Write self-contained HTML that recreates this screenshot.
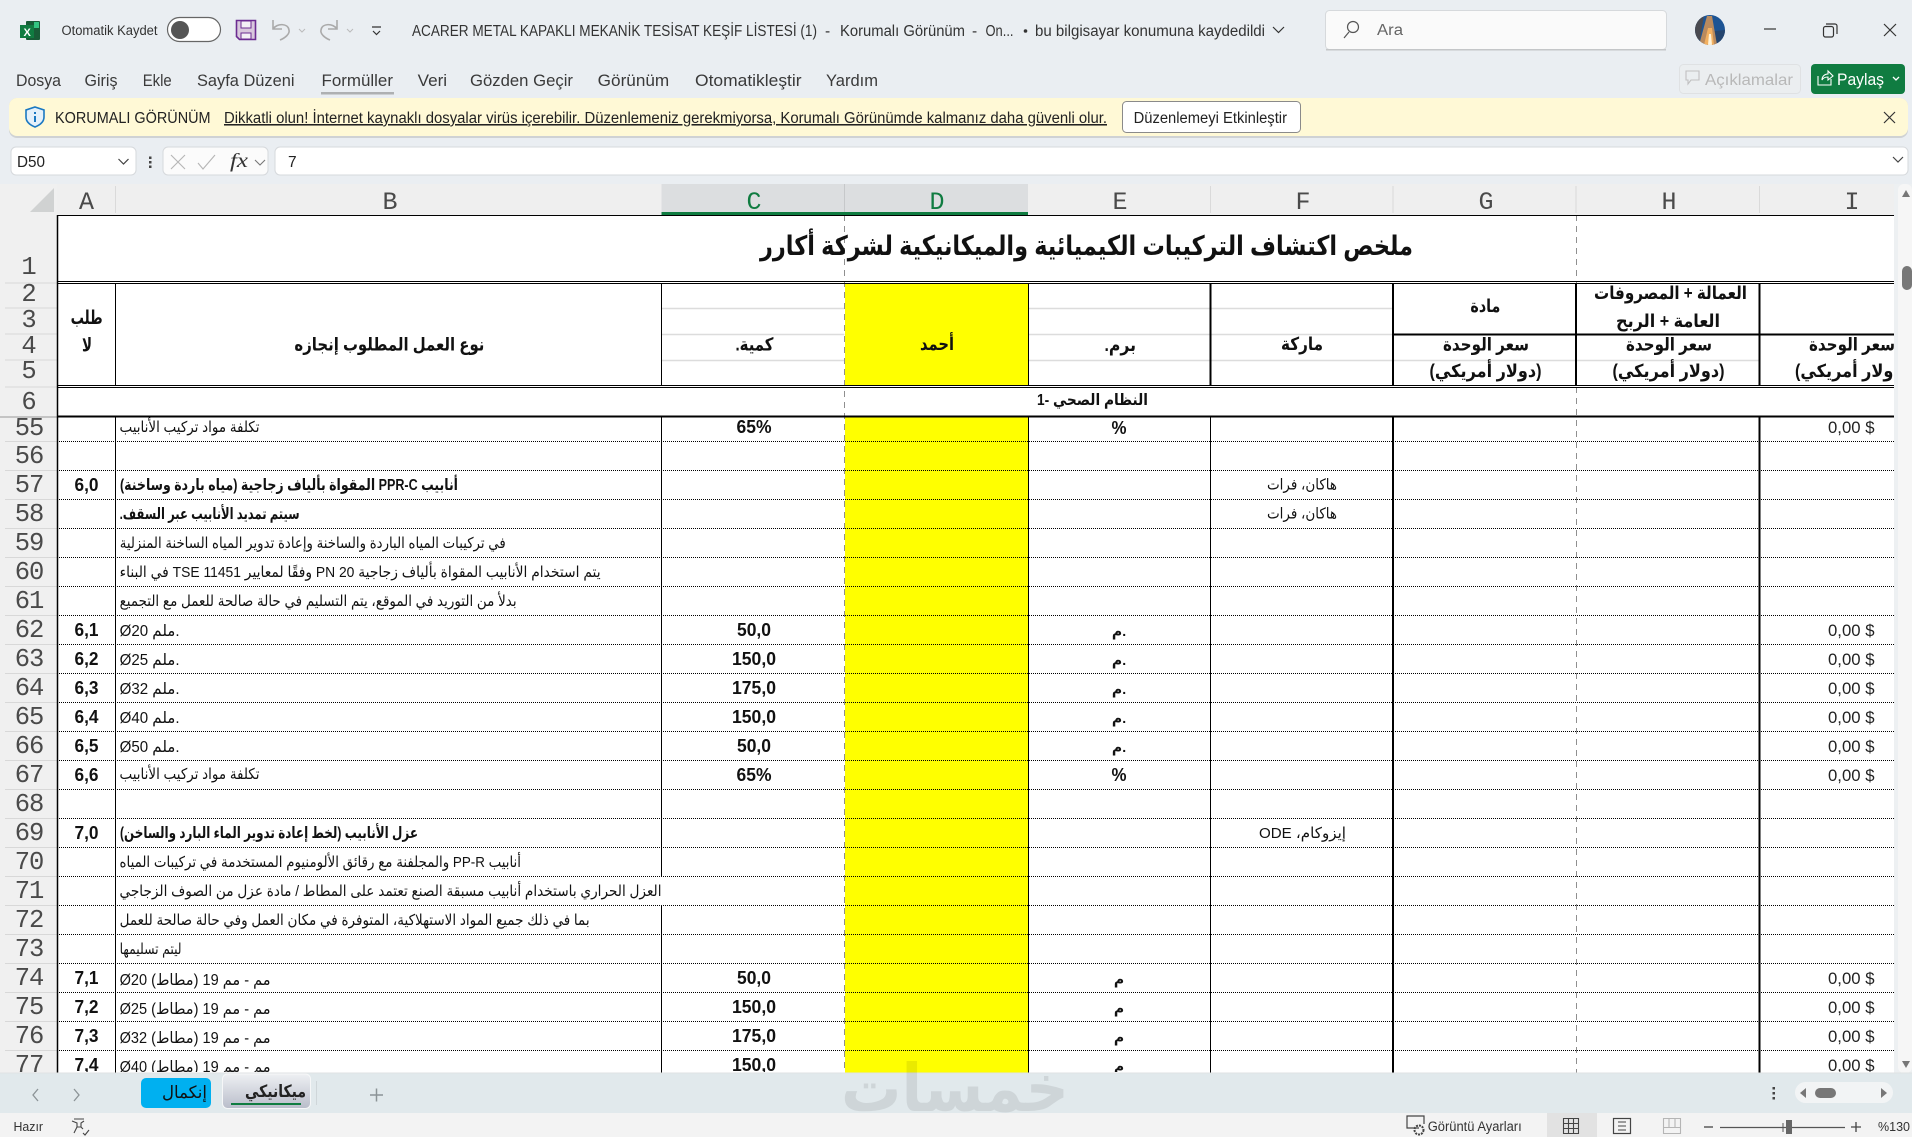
<!DOCTYPE html>
<html lang="tr">
<head>
<meta charset="utf-8">
<title>ACARER METAL KAPAKLI MEKANİK TESİSAT KEŞİF LİSTESİ</title>
<style>
html,body{margin:0;padding:0;width:1912px;height:1137px;overflow:hidden;background:#eaeef2}
svg{display:block}
text{font-family:"Liberation Sans","DejaVu Sans",sans-serif;white-space:pre}
.ui{font-size:15.5px;fill:#333}
.tab{font-size:17px;fill:#3a3a3a}
.col{font-family:"Liberation Mono","DejaVu Sans Mono",monospace;font-size:25px;fill:#4a4a4a;text-anchor:middle}
.row{font-family:"Liberation Mono","DejaVu Sans Mono",monospace;font-size:25.500px;letter-spacing:-1px;fill:#4a4a4a;text-anchor:middle}
.r{direction:rtl;text-anchor:start;fill:#111}
.t{font-size:15px;transform:translateY(1px)}
.tb{font-size:15.500px;font-weight:bold;transform:translateY(1px)}
.h{font-size:18px;font-weight:bold}
.n{font-size:18px;font-weight:bold;fill:#111;text-anchor:middle}
.i{font-size:17px;fill:#222}
.u{font-size:14px;font-weight:bold;fill:#111;text-anchor:middle}
.dot{stroke:#000;stroke-width:1;stroke-dasharray:1 1;fill:none;shape-rendering:crispEdges}
.v1{stroke:#000;stroke-width:1;fill:none;shape-rendering:crispEdges}
.v2{stroke:#000;stroke-width:2;fill:none;shape-rendering:crispEdges}
.lg{stroke:#dcdcdc;stroke-width:1.500;fill:none}
</style>
</head>
<body>
<svg xmlns="http://www.w3.org/2000/svg" width="1912" height="1137" viewBox="0 0 1912 1137">
<defs>
<clipPath id="body"><rect x="57" y="417" width="1837" height="655"/></clipPath>
<clipPath id="rows"><rect x="0" y="417" width="57" height="655"/></clipPath>
<clipPath id="head"><rect x="57" y="215" width="1837" height="202"/></clipPath>
<clipPath id="wm"><rect x="830" y="1060" width="260" height="53"/></clipPath>
<clipPath id="avc"><circle cx="1710" cy="30" r="15"/></clipPath>
<linearGradient id="act" x1="0" y1="0" x2="0" y2="1"><stop offset="0" stop-color="#eef0f3"/><stop offset="1" stop-color="#b9bdca"/></linearGradient>
</defs>

<!-- chrome background -->
<rect width="1912" height="184" fill="#eaeef2"/>

<!-- title bar -->
<rect x="26" y="21" width="14" height="19" rx="1" fill="#185c37"/>
<rect x="20" y="25" width="14" height="13" fill="#107c41"/>
<text x="23.500" y="36" style="font-size:11px;font-weight:bold;fill:#fff">X</text>
<rect x="34" y="22" width="5" height="6" fill="#33c481"/>
<text class="ui" x="61.500" y="35" textLength="96" lengthAdjust="spacingAndGlyphs" style="font-size:13.500px">Otomatik Kaydet</text>
<rect x="167.500" y="17.500" width="53" height="24" rx="12" fill="#fff" stroke="#666" stroke-width="1.200"/>
<circle cx="180" cy="30" r="9" fill="#555"/>
<path d="M236.500 20.500h19v19h-16l-3-3z" fill="#d9c8dd" stroke="#6b2c91" stroke-width="1.600"/>
<rect x="241" y="21" width="10" height="7" fill="#f4f0f6" stroke="#6b2c91"/>
<rect x="241" y="33" width="10" height="6" fill="#f4f0f6" stroke="#6b2c91"/>
<path d="M273 20v9h9M273 29c4-6 15-6 16 1 1 4-4 8-9 10" fill="none" stroke="#aaa" stroke-width="1.600"/>
<path d="M299 29l3 3 3-3" fill="none" stroke="#bbb"/>
<path d="M337 20v9h-9M337 29c-4-6-15-6-16 1-1 4 4 8 9 10" fill="none" stroke="#aaa" stroke-width="1.600"/>
<path d="M347 29l3 3 3-3" fill="none" stroke="#bbb"/>
<path d="M372 27h9M373 31l3.500 3.500 3.500-3.500" fill="none" stroke="#333" stroke-width="1.200"/>
<text class="ui" x="412" y="36" textLength="405" lengthAdjust="spacingAndGlyphs">ACARER METAL KAPAKLI MEKANİK TESİSAT KEŞİF LİSTESİ (1)</text>
<text class="ui" x="825" y="36">-</text>
<text class="ui" x="840" y="36" textLength="125" lengthAdjust="spacingAndGlyphs">Korumalı Görünüm</text>
<text class="ui" x="972" y="36">-</text>
<text class="ui" x="985.500" y="36" textLength="28" lengthAdjust="spacingAndGlyphs">On...</text>
<circle cx="1025.500" cy="31" r="1.800" fill="#333"/>
<text class="ui" x="1035" y="36" textLength="230" lengthAdjust="spacingAndGlyphs">bu bilgisayar konumuna kaydedildi</text>
<path d="M1273 27l5.500 5.500 5.500-5.500" fill="none" stroke="#333" stroke-width="1.200"/>
<rect x="1325.500" y="10.500" width="341" height="39" rx="4" fill="#fafafa" stroke="#d6d9dc"/>
<rect x="1326" y="49" width="340" height="1.500" fill="#c4c6c8"/>
<circle cx="1353" cy="27" r="5.500" fill="none" stroke="#555" stroke-width="1.200"/>
<path d="M1349 32l-5 6" stroke="#555" stroke-width="1.200"/>
<text class="ui" x="1377" y="35" textLength="26" lengthAdjust="spacingAndGlyphs" style="fill:#666">Ara</text>
<g clip-path="url(#avc)">
<rect x="1695" y="15" width="30" height="30" fill="#1d5494"/>
<path d="M1695 15h9l-5 30h-4z" fill="#4a4a50"/>
<path d="M1725 30v15h-8l-3-14z" fill="#25456e"/>
<path d="M1707 16l-8 29h18l-5-29z" fill="#b98a5e"/>
<path d="M1708 28l-4 17h10l-2-17z" fill="#f3b060"/>
<path d="M1709 34l-1 11h4l-1-11z" fill="#fff3d8"/>
</g>
<path d="M1764 29h12" stroke="#333" stroke-width="1.200"/>
<rect x="1823.500" y="26.500" width="10" height="10.500" rx="2" fill="none" stroke="#333" stroke-width="1.200"/>
<path d="M1826 24h9a2 2 0 0 1 2 2v8" fill="none" stroke="#333" stroke-width="1.200"/>
<path d="M1884 24l12 12M1896 24l-12 12" stroke="#333" stroke-width="1.200"/>

<!-- ribbon tabs -->
<text class="tab" x="16" y="86" textLength="45" lengthAdjust="spacingAndGlyphs">Dosya</text>
<text class="tab" x="84.500" y="86" textLength="33" lengthAdjust="spacingAndGlyphs">Giriş</text>
<text class="tab" x="142.700" y="86" textLength="29" lengthAdjust="spacingAndGlyphs">Ekle</text>
<text class="tab" x="197" y="86" textLength="97.500" lengthAdjust="spacingAndGlyphs">Sayfa Düzeni</text>
<text class="tab" x="321.500" y="86" textLength="71.500" lengthAdjust="spacingAndGlyphs">Formüller</text>
<rect x="321" y="92" width="73" height="2.500" fill="#aeb0b2"/>
<text class="tab" x="417.600" y="86" textLength="29.500" lengthAdjust="spacingAndGlyphs">Veri</text>
<text class="tab" x="470" y="86" textLength="103" lengthAdjust="spacingAndGlyphs">Gözden Geçir</text>
<text class="tab" x="597.700" y="86" textLength="71.500" lengthAdjust="spacingAndGlyphs">Görünüm</text>
<text class="tab" x="695" y="86" textLength="106.600" lengthAdjust="spacingAndGlyphs">Otomatikleştir</text>
<text class="tab" x="826" y="86" textLength="52" lengthAdjust="spacingAndGlyphs">Yardım</text>
<rect x="1679.500" y="64.500" width="121" height="29" rx="4" fill="#ebeef0" stroke="#dfe1e3"/>
<path d="M1686 71h13v9h-8l-3 4v-4h-2z" fill="none" stroke="#c0c0c0" stroke-width="1.100"/>
<text x="1705" y="85" textLength="88" lengthAdjust="spacingAndGlyphs" style="font-size:16px;fill:#b8b8b8">Açıklamalar</text>
<rect x="1811" y="64" width="94" height="30" rx="4" fill="#107c41"/>
<path d="M1818 76v9h13v-6M1822 80c0-4 3-6 6-6v-3l5 5-5 4v-3c-3 0-5 1-6 3z" fill="none" stroke="#fff" stroke-width="1.100"/>
<text x="1837" y="85" textLength="47" lengthAdjust="spacingAndGlyphs" style="font-size:16.500px;fill:#fff">Paylaş</text>
<path d="M1893 77l3 3 3-3" fill="none" stroke="#fff" stroke-width="1.300"/>

<!-- protected view banner -->
<rect x="9" y="98" width="1899" height="40" rx="8" fill="#cfd2d4"/>
<rect x="9" y="98" width="1899" height="38" rx="8" fill="#fff9d6"/>
<path d="M35 107l9 3v7c0 5-4 8-9 10-5-2-9-5-9-10v-7z" fill="#e4f0fa" stroke="#1a78c2" stroke-width="1.600"/>
<rect x="34" y="116" width="2" height="6" fill="#1a78c2"/><rect x="34" y="112" width="2" height="2" fill="#1a78c2"/>
<text class="ui" x="55" y="123" textLength="155.600" lengthAdjust="spacingAndGlyphs" style="fill:#222">KORUMALI GÖRÜNÜM</text>
<text class="ui" x="224" y="123" textLength="883" lengthAdjust="spacingAndGlyphs" text-decoration="underline" style="fill:#222">Dikkatli olun! İnternet kaynaklı dosyalar virüs içerebilir. Düzenlemeniz gerekmiyorsa, Korumalı Görünümde kalmanız daha güvenli olur.</text>
<rect x="1122.500" y="101.500" width="178" height="31" rx="4" fill="#fff" stroke="#8a8a8a"/>
<text class="ui" x="1133.600" y="123" textLength="153.400" lengthAdjust="spacingAndGlyphs" style="fill:#222">Düzenlemeyi Etkinleştir</text>
<path d="M1884 112l11 11M1895 112l-11 11" stroke="#333" stroke-width="1.200"/>

<!-- formula bar -->
<rect x="11" y="147" width="125" height="28" rx="5" fill="#fff" stroke="#d6d9dc"/>
<text class="ui" x="17" y="167" textLength="28" lengthAdjust="spacingAndGlyphs" style="fill:#222">D50</text>
<path d="M118.500 159l5 5 5-5" fill="none" stroke="#444" stroke-width="1.200"/>
<rect x="149" y="156.500" width="2.500" height="2.500" fill="#444"/><rect x="149" y="161" width="2.500" height="2.500" fill="#444"/><rect x="149" y="165.500" width="2.500" height="2.500" fill="#444"/>
<rect x="163" y="147" width="105" height="28" rx="5" fill="#fbfbfb" stroke="#d6d9dc"/>
<path d="M171 155l14 14M185 155l-14 14" stroke="#b5b5b5" stroke-width="1.100"/>
<path d="M198 163l5 6 12-14" fill="none" stroke="#b5b5b5" stroke-width="1.100"/>
<text x="230" y="167" textLength="18" lengthAdjust="spacingAndGlyphs" style="font-family:'Liberation Serif',serif;font-style:italic;font-size:20px;fill:#333">fx</text>
<path d="M255 160l5 5 5-5" fill="none" stroke="#777" stroke-width="1.100"/>
<rect x="275" y="147" width="1633" height="28" rx="5" fill="#fff" stroke="#d6d9dc"/>
<text x="288" y="167" style="font-size:15.500px;fill:#222">7</text>
<path d="M1893 157l5 5 5-5" fill="none" stroke="#444" stroke-width="1.200"/>

<!-- column / row header background -->
<rect x="0" y="184" width="1894" height="31" fill="#efefef"/>
<rect x="0" y="184" width="57" height="890" fill="#f0f0f0"/>
<rect x="661.500" y="184" width="366.500" height="28" fill="#dcdee0"/>
<rect x="661.500" y="212" width="366.500" height="3" fill="#107c41"/>
<path d="M54 188v24H30z" fill="#d0d2d2"/>
<path d="M115.500 186v27M1210.500 186v27M1393 186v27M1576 186v27M1759.500 186v27" stroke="#dadada"/>
<path d="M844.500 184v28" stroke="#c6c8ca"/>
<text class="col" x="86.500" y="209">A</text>
<text class="col" x="390" y="209">B</text>
<text class="col" x="754" y="209" style="fill:#107c41">C</text>
<text class="col" x="937" y="209" style="fill:#107c41">D</text>
<text class="col" x="1120" y="209">E</text>
<text class="col" x="1303" y="209">F</text>
<text class="col" x="1486" y="209">G</text>
<text class="col" x="1669" y="209">H</text>
<text class="col" x="1852" y="209">I</text>

<!-- row header text -->
<path d="M5 283h52M5 308h52M5 334h52M5 360h52M5 387h52M5 470.500h52M5 499.500h52M5 528.500h52M5 557.500h52M5 586.500h52M5 615.500h52M5 644.500h52M5 673.500h52M5 702.500h52M5 731.500h52M5 760.500h52M5 789.500h52M5 818.500h52M5 847.500h52M5 876.500h52M5 905.500h52M5 934.500h52M5 963.500h52M5 992.500h52M5 1021.500h52M5 1050.500h52M5 441.500h52" stroke="#d8d8d8" fill="none"/>
<path d="M0 417h57" stroke="#999" fill="none"/>
<text class="row" x="28.500" y="274">1</text>
<text class="row" x="28.500" y="301">2</text>
<text class="row" x="28.500" y="327">3</text>
<text class="row" x="28.500" y="353">4</text>
<text class="row" x="28.500" y="378">5</text>
<text class="row" x="28.500" y="409">6</text>
<g clip-path="url(#rows)">
<text class="row" x="29" y="435">55</text>
<text class="row" x="29" y="463">56</text>
<text class="row" x="29" y="492">57</text>
<text class="row" x="29" y="521">58</text>
<text class="row" x="29" y="550">59</text>
<text class="row" x="29" y="579">60</text>
<text class="row" x="29" y="608">61</text>
<text class="row" x="29" y="637">62</text>
<text class="row" x="29" y="666">63</text>
<text class="row" x="29" y="695">64</text>
<text class="row" x="29" y="724">65</text>
<text class="row" x="29" y="753">66</text>
<text class="row" x="29" y="782">67</text>
<text class="row" x="29" y="811">68</text>
<text class="row" x="29" y="840">69</text>
<text class="row" x="29" y="869">70</text>
<text class="row" x="29" y="898">71</text>
<text class="row" x="29" y="927">72</text>
<text class="row" x="29" y="956">73</text>
<text class="row" x="29" y="985">74</text>
<text class="row" x="29" y="1014">75</text>
<text class="row" x="29" y="1043">76</text>
<text class="row" x="29" y="1072">77</text>
</g>

<!-- sheet white area -->
<rect x="57" y="215" width="1837" height="858" fill="#fff"/>
<rect x="845" y="283" width="183" height="103" fill="#ffff00"/>
<rect x="845" y="417" width="183" height="656" fill="#ffff00"/>

<!-- light grid in header -->
<path d="M661.500 308.500h183M661.500 334.500h183M661.500 360.500h183M1028 308.500h365M1028 334.500h365M1028 360.500h732" class="lg"/>

<!-- dotted row lines -->
<path class="dot" d="M57 441.500H1894M57 470.500H1894M57 499.500H1894M57 528.500H1894M57 557.500H1894M57 586.500H1894M57 615.500H1894M57 644.500H1894M57 673.500H1894M57 702.500H1894M57 731.500H1894M57 760.500H1894M57 789.500H1894M57 818.500H1894M57 847.500H1894M57 876.500H1894M57 905.500H1894M57 934.500H1894M57 963.500H1894M57 992.500H1894M57 1021.500H1894M57 1050.500H1894"/>

<!-- body verticals -->
<path class="v1" d="M115.500 283V386M661.500 283V386M1028.500 283V386M115.500 417V1073M661.500 417V876M661.500 905V1073M1028.500 417V1073M1210.500 417V1073"/>
<path class="v2" d="M1210.500 283V386M1393 283V386M1576 283V386M1759.500 283V386M1393 417V1073M1759.500 417V1073"/>
<path class="v2" d="M1393 334.500H1894"/>
<!-- dashed page breaks -->
<path d="M844.500 215V1073M1576.500 215V283M1576.500 387V1073" fill="none" stroke="#8f8f8f" stroke-dasharray="6 5"/>
<!-- black frame -->
<path d="M57.500 215V1073" stroke="#000" stroke-width="1.500" fill="none"/>
<path d="M57 215.500H1894M57 281.500H1894M57 283.500H1894M57 385.500H1894M57 387.500H1894" stroke="#000" stroke-width="1" fill="none" shape-rendering="crispEdges"/>
<path d="M57 416.500H1894" stroke="#000" stroke-width="2" fill="none"/>

<!-- headers -->
<g clip-path="url(#head)">
<text class="r" x="1413" y="255" textLength="653" lengthAdjust="spacingAndGlyphs" style="font-size:27px;font-weight:bold">ملخص اكتشاف التركيبات الكيميائية والميكانيكية لشركة أكارر</text>
<text class="r h" x="102.600" y="324" textLength="32" lengthAdjust="spacingAndGlyphs" style="font-size:19px">طلب</text>
<text class="r h" x="92" y="351.500" textLength="10" lengthAdjust="spacingAndGlyphs" style="font-size:19px">لا</text>
<text class="r h" x="484.400" y="350.500" textLength="190" lengthAdjust="spacingAndGlyphs">نوع العمل المطلوب إنجازه</text>
<text class="r h" x="773.500" y="350.500" textLength="38" lengthAdjust="spacingAndGlyphs">كمية.</text>
<text class="r h" x="954" y="350" textLength="34" lengthAdjust="spacingAndGlyphs">أحمد</text>
<text class="r h" x="1136" y="351" textLength="31.500" lengthAdjust="spacingAndGlyphs">برم.</text>
<text class="r h" x="1323" y="350" textLength="42" lengthAdjust="spacingAndGlyphs">ماركة</text>
<text class="r h" x="1500.400" y="312" textLength="30" lengthAdjust="spacingAndGlyphs">مادة</text>
<text class="r h" x="1747" y="299" textLength="153" lengthAdjust="spacingAndGlyphs">العمالة + المصروفات</text>
<text class="r h" x="1720" y="327" textLength="104" lengthAdjust="spacingAndGlyphs">العامة + الربح</text>
<text class="r h" x="1529" y="350.500" textLength="86" lengthAdjust="spacingAndGlyphs">سعر الوحدة</text>
<text class="r h" x="1712" y="350.500" textLength="86" lengthAdjust="spacingAndGlyphs">سعر الوحدة</text>
<text class="r h" x="1895" y="350.500" textLength="86" lengthAdjust="spacingAndGlyphs">سعر الوحدة</text>
<text class="r h" x="1541.500" y="377" textLength="112" lengthAdjust="spacingAndGlyphs">(دولار أمريكي)</text>
<text class="r h" x="1724.500" y="377" textLength="112" lengthAdjust="spacingAndGlyphs">(دولار أمريكي)</text>
<text class="r h" x="1907" y="377" textLength="112" lengthAdjust="spacingAndGlyphs">(دولار أمريكي)</text>
<text class="r h" x="1148" y="405" textLength="111" lengthAdjust="spacingAndGlyphs" style="font-size:15.500px">النظام الصحي -1</text>
</g>

<!-- body cells -->
<g clip-path="url(#body)">
<text class="r t" x="259.500" y="431" textLength="140" lengthAdjust="spacingAndGlyphs">تكلفة مواد تركيب الأنابيب</text>
<text class="n" x="754" y="433" textLength="35" lengthAdjust="spacingAndGlyphs">65%</text>
<text class="n" x="1119" y="434" textLength="15" lengthAdjust="spacingAndGlyphs">%</text>
<text class="i" x="1828" y="433" textLength="46.500" lengthAdjust="spacingAndGlyphs">0,00 $</text>

<text class="n" x="86.500" y="491" textLength="24" lengthAdjust="spacingAndGlyphs">6,0</text>
<text class="r tb" x="458" y="489" textLength="338" lengthAdjust="spacingAndGlyphs">أنابيب PPR-C المقواة بألياف زجاجية (مياه باردة وساخنة)</text>
<text class="r t" x="1337" y="488.500" textLength="70" lengthAdjust="spacingAndGlyphs">هاكان، فرات</text>

<text class="r tb" x="299.600" y="518" textLength="180" lengthAdjust="spacingAndGlyphs">سيتم تمديد الأنابيب عبر السقف.</text>
<text class="r t" x="1337" y="517.500" textLength="70" lengthAdjust="spacingAndGlyphs">هاكان، فرات</text>

<text class="r t" x="505.700" y="547" textLength="386" lengthAdjust="spacingAndGlyphs">في تركيبات المياه الباردة والساخنة وإعادة تدوير المياه الساخنة المنزلية</text>
<text class="r t" x="600.600" y="576" textLength="481" lengthAdjust="spacingAndGlyphs">يتم استخدام الأنابيب المقواة بألياف زجاجية PN 20 وفقًا لمعايير TSE 11451 في البناء</text>
<text class="r t" x="516.600" y="605" textLength="397" lengthAdjust="spacingAndGlyphs">بدلأ من التوريد في الموقع، يتم التسليم في حالة صالحة للعمل مع التجميع</text>

<text class="n" x="86.500" y="636" textLength="24" lengthAdjust="spacingAndGlyphs">6,1</text>
<text x="119.600" y="636" textLength="60" lengthAdjust="spacingAndGlyphs" style="font-size:16px;fill:#111">Ø20 ملم.</text>
<text class="n" x="754" y="636" textLength="34" lengthAdjust="spacingAndGlyphs">50,0</text>
<text class="u" x="1119" y="636">م.</text>
<text class="i" x="1828" y="636" textLength="46.500" lengthAdjust="spacingAndGlyphs">0,00 $</text>

<text class="n" x="86.500" y="665" textLength="24" lengthAdjust="spacingAndGlyphs">6,2</text>
<text x="119.600" y="665" textLength="60" lengthAdjust="spacingAndGlyphs" style="font-size:16px;fill:#111">Ø25 ملم.</text>
<text class="n" x="754" y="665" textLength="44" lengthAdjust="spacingAndGlyphs">150,0</text>
<text class="u" x="1119" y="665">م.</text>
<text class="i" x="1828" y="665" textLength="46.500" lengthAdjust="spacingAndGlyphs">0,00 $</text>

<text class="n" x="86.500" y="694" textLength="24" lengthAdjust="spacingAndGlyphs">6,3</text>
<text x="119.600" y="694" textLength="60" lengthAdjust="spacingAndGlyphs" style="font-size:16px;fill:#111">Ø32 ملم.</text>
<text class="n" x="754" y="694" textLength="44" lengthAdjust="spacingAndGlyphs">175,0</text>
<text class="u" x="1119" y="694">م.</text>
<text class="i" x="1828" y="694" textLength="46.500" lengthAdjust="spacingAndGlyphs">0,00 $</text>

<text class="n" x="86.500" y="723" textLength="24" lengthAdjust="spacingAndGlyphs">6,4</text>
<text x="119.600" y="723" textLength="60" lengthAdjust="spacingAndGlyphs" style="font-size:16px;fill:#111">Ø40 ملم.</text>
<text class="n" x="754" y="723" textLength="44" lengthAdjust="spacingAndGlyphs">150,0</text>
<text class="u" x="1119" y="723">م.</text>
<text class="i" x="1828" y="723" textLength="46.500" lengthAdjust="spacingAndGlyphs">0,00 $</text>

<text class="n" x="86.500" y="752" textLength="24" lengthAdjust="spacingAndGlyphs">6,5</text>
<text x="119.600" y="752" textLength="60" lengthAdjust="spacingAndGlyphs" style="font-size:16px;fill:#111">Ø50 ملم.</text>
<text class="n" x="754" y="752" textLength="34" lengthAdjust="spacingAndGlyphs">50,0</text>
<text class="u" x="1119" y="752">م.</text>
<text class="i" x="1828" y="752" textLength="46.500" lengthAdjust="spacingAndGlyphs">0,00 $</text>

<text class="n" x="86.500" y="781" textLength="24" lengthAdjust="spacingAndGlyphs">6,6</text>
<text class="r t" x="259.500" y="778" textLength="140" lengthAdjust="spacingAndGlyphs">تكلفة مواد تركيب الأنابيب</text>
<text class="n" x="754" y="781" textLength="35" lengthAdjust="spacingAndGlyphs">65%</text>
<text class="n" x="1119" y="781" textLength="15" lengthAdjust="spacingAndGlyphs">%</text>
<text class="i" x="1828" y="781" textLength="46.500" lengthAdjust="spacingAndGlyphs">0,00 $</text>

<text class="n" x="86.500" y="839" textLength="24" lengthAdjust="spacingAndGlyphs">7,0</text>
<text class="r tb" x="418" y="837" textLength="298" lengthAdjust="spacingAndGlyphs">عزل الأنابيب (لخط إعادة تدوير الماء البارد والساخن)</text>
<text class="r t" x="1346" y="837" textLength="87" lengthAdjust="spacingAndGlyphs">إيزوكام، ODE</text>

<text class="r t" x="521" y="866" textLength="401.500" lengthAdjust="spacingAndGlyphs">أنابيب PP-R والمجلفنة مع رقائق الألومنيوم المستخدمة في تركيبات المياه</text>
<text class="r t" x="661.500" y="895" textLength="542" lengthAdjust="spacingAndGlyphs">العزل الحراري باستخدام أنابيب مسبقة الصنع تعتمد على المطاط / مادة عزل من الصوف الزجاجي</text>
<text class="r t" x="589.600" y="924" textLength="470" lengthAdjust="spacingAndGlyphs">بما في ذلك جميع المواد الاستهلاكية، المتوفرة في مكان العمل وفي حالة صالحة للعمل</text>
<text class="r t" x="181.600" y="953" textLength="62" lengthAdjust="spacingAndGlyphs">ليتم تسليمها</text>

<text class="n" x="86.500" y="984" textLength="24" lengthAdjust="spacingAndGlyphs">7,1</text>
<text class="r t" x="270.600" y="984" textLength="151" lengthAdjust="spacingAndGlyphs" style="font-size:15.500px">مم - مم 19 (مطاط) Ø20</text>
<text class="n" x="754" y="984" textLength="34" lengthAdjust="spacingAndGlyphs">50,0</text>
<text class="u" x="1119" y="984">م</text>
<text class="i" x="1828" y="984" textLength="46.500" lengthAdjust="spacingAndGlyphs">0,00 $</text>

<text class="n" x="86.500" y="1013" textLength="24" lengthAdjust="spacingAndGlyphs">7,2</text>
<text class="r t" x="270.600" y="1013" textLength="151" lengthAdjust="spacingAndGlyphs" style="font-size:15.500px">مم - مم 19 (مطاط) Ø25</text>
<text class="n" x="754" y="1013" textLength="44" lengthAdjust="spacingAndGlyphs">150,0</text>
<text class="u" x="1119" y="1013">م</text>
<text class="i" x="1828" y="1013" textLength="46.500" lengthAdjust="spacingAndGlyphs">0,00 $</text>

<text class="n" x="86.500" y="1042" textLength="24" lengthAdjust="spacingAndGlyphs">7,3</text>
<text class="r t" x="270.600" y="1042" textLength="151" lengthAdjust="spacingAndGlyphs" style="font-size:15.500px">مم - مم 19 (مطاط) Ø32</text>
<text class="n" x="754" y="1042" textLength="44" lengthAdjust="spacingAndGlyphs">175,0</text>
<text class="u" x="1119" y="1042">م</text>
<text class="i" x="1828" y="1042" textLength="46.500" lengthAdjust="spacingAndGlyphs">0,00 $</text>

<text class="n" x="86.500" y="1071" textLength="24" lengthAdjust="spacingAndGlyphs">7,4</text>
<text class="r t" x="270.600" y="1071" textLength="151" lengthAdjust="spacingAndGlyphs" style="font-size:15.500px">مم - مم 19 (مطاط) Ø40</text>
<text class="n" x="754" y="1071" textLength="44" lengthAdjust="spacingAndGlyphs">150,0</text>
<text class="u" x="1119" y="1071">م</text>
<text class="i" x="1828" y="1071" textLength="46.500" lengthAdjust="spacingAndGlyphs">0,00 $</text>
</g>

<!-- vertical scrollbar -->
<rect x="1894" y="184" width="18" height="889" fill="#edf0f2"/>
<rect x="1898" y="184" width="14" height="889" rx="6" fill="#f6f6f6"/>
<path d="M1906 190l4 7h-8z" fill="#777"/>
<rect x="1902" y="266" width="10" height="24" rx="5" fill="#777"/>
<path d="M1906 1068l4-7h-8z" fill="#777"/>

<!-- tab bar -->
<rect x="0" y="1073" width="1912" height="40" fill="#e1e9ec"/>
<path d="M0 1073h1912" stroke="#dfe2e3"/>
<g clip-path="url(#wm)">
<text x="1069" y="1111" textLength="228" lengthAdjust="spacingAndGlyphs" style="direction:rtl;text-anchor:start;font-size:66px;font-weight:bold;fill:#000;opacity:.08">خمسات</text>
</g>
<path d="M38 1089l-5 6 5 6M74 1089l5 6-5 6" fill="none" stroke="#8b9396" stroke-width="1.300"/>
<rect x="141" y="1078" width="70" height="30" rx="5" fill="#00b0f0"/>
<text class="r" x="207" y="1098" textLength="45" lengthAdjust="spacingAndGlyphs" style="font-size:17px;fill:#111">إنكمال</text>
<rect x="222.500" y="1074" width="88" height="34.500" rx="5" fill="url(#act)" stroke="#f6f7f8"/>
<text class="r" x="306" y="1097" textLength="61" lengthAdjust="spacingAndGlyphs" style="font-size:17px;font-weight:bold;fill:#222">ميكانيكي</text>
<rect x="231" y="1103" width="70" height="2" fill="#107c41"/>
<path d="M316.500 1081v24" stroke="#cfd6d9"/>
<path d="M370 1095h13M376.500 1088.500v13" stroke="#8b9396" stroke-width="1.500"/>
<rect x="1772.500" y="1087" width="2.500" height="2.500" fill="#444"/><rect x="1772.500" y="1092" width="2.500" height="2.500" fill="#444"/><rect x="1772.500" y="1097" width="2.500" height="2.500" fill="#444"/>
<rect x="1795" y="1082" width="98" height="21" rx="10.500" fill="#f2f4f5"/>
<path d="M1800 1093l6-5v10z" fill="#777"/>
<rect x="1815" y="1088" width="21" height="10" rx="5" fill="#777"/>
<path d="M1887 1093l-6-5v10z" fill="#777"/>

<!-- status bar -->
<rect x="0" y="1113" width="1912" height="24" fill="#f3f3f3"/>
<text x="13.500" y="1131" textLength="29.500" lengthAdjust="spacingAndGlyphs" style="font-size:13px;fill:#333">Hazır</text>
<path d="M74 1119h10M72 1121l5 2v4l-3 6M84 1121l-3 2v4l2 2M77 1127h4M83 1133l2 2 4-5" fill="none" stroke="#444" stroke-width="1.100"/>
<path d="M1419 1128h-12v-12h17v8" fill="none" stroke="#444" stroke-width="1.200"/>
<circle cx="1419" cy="1130" r="4.500" fill="none" stroke="#444" stroke-width="2" stroke-dasharray="2 1"/>
<text x="1427.700" y="1131" textLength="94" lengthAdjust="spacingAndGlyphs" style="font-size:13.500px;fill:#333">Görüntü Ayarları</text>
<rect x="1547" y="1113" width="50" height="24" fill="#e2e2e2"/>
<path d="M1563.500 1118.500h15v15h-15zM1568.500 1118.500v15M1573.500 1118.500v15M1563.500 1123.500h15M1563.500 1128.500h15" fill="none" stroke="#444" stroke-width="1.100"/>
<rect x="1613.500" y="1118.500" width="17" height="15" fill="none" stroke="#444" stroke-width="1.200"/>
<path d="M1618 1122h8M1618 1126h8M1618 1130h8" stroke="#444"/>
<path d="M1663.500 1118.500h17v15h-17zM1669 1118.500v9M1675 1118.500v9M1663.500 1127.500h17" fill="none" stroke="#b5b5b5" stroke-width="1.100"/>
<path d="M1704 1127h9" stroke="#444" stroke-width="1.300"/>
<path d="M1720 1127.500h125" stroke="#555" stroke-width="1.200"/>
<path d="M1783 1123v9" stroke="#555"/>
<rect x="1786" y="1120" width="6" height="14" fill="#666"/>
<path d="M1851 1127h10M1856 1122v10" stroke="#444" stroke-width="1.300"/>
<text x="1878" y="1131" textLength="32" lengthAdjust="spacingAndGlyphs" style="font-size:13px;fill:#333">%130</text>
</svg>
</body>
</html>
